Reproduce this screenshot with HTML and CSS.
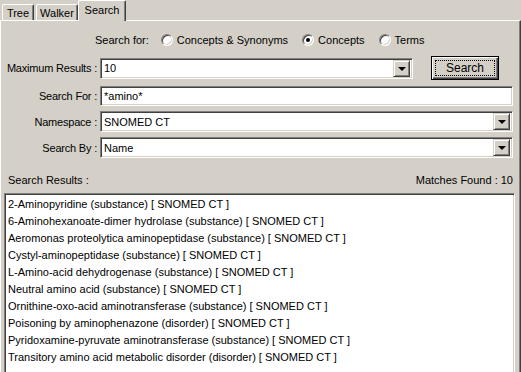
FILE: index.html
```html
<!DOCTYPE html>
<html>
<head>
<meta charset="utf-8">
<link rel="stylesheet" href="styles.css">
</head>
<body>
<div class="window">
  <div class="tabs">
    <div class="tab tab-tree">Tree</div>
    <div class="tab tab-walker">Walker</div>
    <div class="tab tab-active">Search</div>
  </div>
  <div class="panel">
    <div class="search-for">
      <span class="sf-label">Search for:</span>
      <span class="opt"><span class="radio"></span>Concepts &amp; Synonyms</span>
      <span class="opt"><span class="radio checked"></span>Concepts</span>
      <span class="opt"><span class="radio"></span>Terms</span>
    </div>
    <div class="form">
      <div class="flabel">Maximum Results :</div>
      <div class="row-first">
        <div class="field combo combo-short"><span class="val">10</span><span class="arrow-btn"><span class="tri"></span></span></div>
        <div class="btn"><span class="focus">Search</span></div>
      </div>
      <div class="flabel">Search For :</div>
      <div class="field text"><span class="val">*amino*</span></div>
      <div class="flabel">Namespace :</div>
      <div class="field combo"><span class="val">SNOMED CT</span><span class="arrow-btn"><span class="tri"></span></span></div>
      <div class="flabel">Search By :</div>
      <div class="field combo"><span class="val">Name</span><span class="arrow-btn"><span class="tri"></span></span></div>
    </div>
    <div class="results-head"><span>Search Results :</span><span>Matches Found : 10</span></div>
    <div class="list">
      <div class="item">2-Aminopyridine (substance) [ SNOMED CT ]</div>
      <div class="item">6-Aminohexanoate-dimer hydrolase (substance) [ SNOMED CT ]</div>
      <div class="item">Aeromonas proteolytica aminopeptidase (substance) [ SNOMED CT ]</div>
      <div class="item">Cystyl-aminopeptidase (substance) [ SNOMED CT ]</div>
      <div class="item">L-Amino-acid dehydrogenase (substance) [ SNOMED CT ]</div>
      <div class="item">Neutral amino acid (substance) [ SNOMED CT ]</div>
      <div class="item">Ornithine-oxo-acid aminotransferase (substance) [ SNOMED CT ]</div>
      <div class="item">Poisoning by aminophenazone (disorder) [ SNOMED CT ]</div>
      <div class="item">Pyridoxamine-pyruvate aminotransferase (substance) [ SNOMED CT ]</div>
      <div class="item">Transitory amino acid metabolic disorder (disorder) [ SNOMED CT ]</div>
    </div>
  </div>
</div>
</body>
</html>
```

FILE: styles.css
```css
* { box-sizing: border-box; }
html, body { margin: 0; padding: 0; }
body {
  background: #d4d0c8;
  font-family: "Liberation Sans", Arial, sans-serif;
  font-size: 11px;
  color: #000;
  width: 521px;
  height: 372px;
  overflow: hidden;
}
.window { width: 521px; height: 372px; display: flex; flex-direction: column; overflow: hidden; }

.tabs {
  height: 20px;
  flex-shrink: 0;
  display: flex;
  align-items: flex-end;
  padding-left: 2px;
  position: relative;
  z-index: 1;
}
.tab {
  height: 16px;
  background: #d4d0c8;
  border-top: 1px solid #fff;
  border-left: 1px solid #fff;
  border-right: 1px solid #404040;
  box-shadow: inset -1px 0 #808080;
  border-top-left-radius: 2px;
  border-top-right-radius: 2px;
  display: flex;
  align-items: center;
  justify-content: center;
  padding-top: 1px;
}
.tab-tree { width: 32px; }
.tab-walker { width: 42px; margin-left: 2px; }
.tab-active {
  width: 48px;
  height: 21px;
  margin-bottom: -1px;
  padding-bottom: 3px;
}

.panel {
  flex: 1 1 auto;
  border-top: 1px solid #fff;
  border-left: 1px solid #fff;
  border-right: 1px solid #404040;
  box-shadow: inset -1px 0 #808080;
  padding: 11px 7px 0 0;
  display: flex;
  flex-direction: column;
  min-height: 0;
  overflow: hidden;
}
.panel > * { flex-shrink: 0; }

.search-for {
  height: 16px;
  display: flex;
  align-items: center;
  padding-left: 94px;
}
.sf-label { margin-right: 12px; }
.opt { display: flex; align-items: center; margin-right: 14px; }
.radio {
  width: 12px;
  height: 12px;
  border-radius: 50%;
  background: #fff;
  border: 1px solid;
  border-color: #808080 #fff #fff #808080;
  box-shadow: inset 1px 1px #404040, inset -1px -1px #d4d0c8;
  margin-right: 4px;
  display: flex;
  align-items: center;
  justify-content: center;
}
.radio.checked::after {
  content: "";
  width: 4px;
  height: 4px;
  border-radius: 50%;
  background: #000;
}

.form {
  margin-top: 8px;
  display: grid;
  grid-template-columns: 99px 1fr;
  grid-template-rows: 24px 21px 21px 21px;
  row-gap: 5px;
  align-items: center;
}
.flabel { text-align: right; padding-right: 3px; letter-spacing: -0.2px; }
.row-first { display: flex; align-items: center; }

.field {
  height: 21px;
  background: #fff;
  border: 1px solid;
  border-color: #808080 #fff #fff #808080;
  box-shadow: inset 1px 1px #404040, inset -1px -1px #d4d0c8;
  display: flex;
  align-items: center;
  padding: 2px;
}
.field.text { height: 20px; }
.val { flex: 1; padding-left: 1px; }
.combo-short { width: 313px; }

.arrow-btn {
  width: 17px;
  height: 17px;
  background: #d4d0c8;
  border: 1px solid;
  border-color: #d4d0c8 #404040 #404040 #d4d0c8;
  box-shadow: inset 1px 1px #fff, inset -1px -1px #808080;
  display: flex;
  align-items: center;
  justify-content: center;
}
.tri {
  width: 0;
  height: 0;
  border-left: 4px solid transparent;
  border-right: 4px solid transparent;
  border-top: 4px solid #000;
  margin-top: 1px;
}

.btn {
  width: 68px;
  height: 24px;
  margin-left: 18px;
  border: 1px solid #000;
  background: #d4d0c8;
  box-shadow: inset 1px 1px #fff, inset -1px -1px #404040, inset -2px -2px #808080;
  padding: 3px;
  display: flex;
}
.focus {
  flex: 1;
  border: 1px dotted #000;
  display: flex;
  align-items: center;
  justify-content: center;
  font-size: 12px;
}

.results-head {
  margin-top: 15px;
  height: 14px;
  display: flex;
  align-items: center;
  justify-content: space-between;
  padding-left: 7px;
}

.list {
  margin: 6px -2px 0 3px;
  height: 200px;
  background: #fff;
  border: 1px solid;
  border-color: #808080 #fff #fff #808080;
  box-shadow: inset 1px 1px #404040, inset -1px -1px #d4d0c8;
  padding: 2px 2px 0 3px;
}
.item { height: 17px; line-height: 17px; white-space: nowrap; }
```
